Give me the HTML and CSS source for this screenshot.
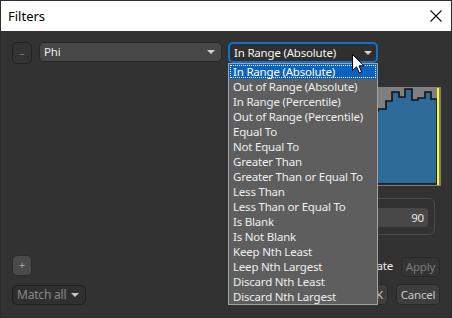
FILE: index.html
```html
<!DOCTYPE html>
<html>
<head>
<meta charset="utf-8">
<link rel="stylesheet" href="styles.css">
</head>
<body>
<div class="window">
  <div class="titlebar">
    <span class="title">Filters</span>
    <svg class="close" width="12" height="12" viewBox="0 0 12 12"><path d="M0.5 0.5 L11.5 11.5 M11.5 0.5 L0.5 11.5" stroke="#111" stroke-width="1.1" fill="none"/></svg>
  </div>
  <div class="content">
    <div class="row1">
      <div class="btn-minus">–</div>
      <div class="select phi"><span>Phi</span><i class="arrow"></i></div>
      <div class="opwrap">
        <div class="select op"><span>In Range (Absolute)</span><i class="arrow"></i></div>
        <ul class="list">
          <li class="sel">In Range (Absolute)</li>
          <li>Out of Range (Absolute)</li>
          <li>In Range (Percentile)</li>
          <li>Out of Range (Percentile)</li>
          <li>Equal To</li>
          <li>Not Equal To</li>
          <li>Greater Than</li>
          <li>Greater Than or Equal To</li>
          <li>Less Than</li>
          <li>Less Than or Equal To</li>
          <li>Is Blank</li>
          <li>Is Not Blank</li>
          <li>Keep Nth Least</li>
          <li>Leep Nth Largest</li>
          <li>Discard Nth Least</li>
          <li>Discard Nth Largest</li>
        </ul>
      </div>
    </div>
    <div class="detail">
      <svg class="hist" width="213" height="99" viewBox="0 0 213 99">
        <rect x="0" y="0" width="213" height="99" fill="#7f7f7f"/>
        <path d="M2 97 L2 80 L20 80 L20 68 L40 68 L40 55 L60 55 L60 48 L80 48 L80 40 L100 40 L100 34 L120 34 L120 28 L140 28 L140 24 L150 24 L150 22 L158 22 L158 14 L164 14 L164 5 L171 5 L171 10 L177 10 L177 2 L184 2 L184 13 L190 13 L190 11 L197 11 L197 5 L203 5 L203 12 L209 12 L209 97 Z" fill="#2e6b98" stroke="#111" stroke-width="1.6" stroke-linejoin="miter"/>
        <rect x="209" y="1" width="2" height="97" fill="#ffff00"/>
      </svg>
      <div class="range">
        <div class="num minv"></div>
        <div class="num maxv">90</div>
      </div>
    </div>
    <div class="spacer"></div>
    <div class="rowa">
      <div class="btn-plus">+</div>
      <div class="right">
        <label class="auto"><span class="cb"></span>Auto Update</label>
        <div class="btn disabled">Apply</div>
      </div>
    </div>
    <div class="rowb">
      <div class="select match"><span>Match all</span><i class="arrow dim"></i></div>
      <div class="right">
        <div class="btn ok">OK</div>
        <div class="btn cancel">Cancel</div>
      </div>
    </div>
  </div>
  <svg class="cursor" width="13" height="20" viewBox="0 0 13 20"><path d="M0.5 0.5 L0.5 16.5 L4.5 12.8 L7.2 18.8 L9.6 17.8 L7 11.8 L12 11.8 Z" fill="#fff" stroke="#000" stroke-width="1" stroke-linejoin="miter"/></svg>
</div>
</body>
</html>
```
FILE: styles.css
```css
* { box-sizing: border-box; }
html, body { margin: 0; padding: 0; background: #323232; }
body { font-family: "Noto Sans", "Open Sans", sans-serif; font-size: 11.5px; letter-spacing: -0.2px; }
.window {
  position: relative;
  width: 452px; height: 318px;
  border: 1px solid #2c2c2c;
  display: flex; flex-direction: column;
  background: #323232;
  overflow: hidden;
}
.titlebar {
  height: 30px; background: #fff;
  display: flex; align-items: center; justify-content: space-between;
  padding: 0 9px 0 7px;
  flex: none;
}
.title { font-size: 13px; color: #000; letter-spacing: 0; }
.close { display: block; margin-top: -1px; }
.content {
  flex: 1;
  display: flex; flex-direction: column;
  padding: 11px 11px 12px 11px;
}
.row1 { display: flex; align-items: flex-start; height: 22px; flex: none; }
.btn-minus {
  width: 20px; height: 22px;
  border: 1px solid #212121; border-radius: 5px;
  background: #333;
  color: #7a7a7a; font-size: 10px; line-height: 20px; text-align: center;
}
.select {
  position: relative;
  display: flex; align-items: center;
  border-radius: 5px;
  color: #ececec;
}
.select span { line-height: 1; }
.arrow {
  position: absolute; right: 6px; top: 50%;
  width: 0; height: 0; margin-top: -2px;
  border-left: 4px solid transparent; border-right: 4px solid transparent;
  border-top: 4px solid #d0d0d0;
}
.arrow.dim { border-top-color: #c8c8c8; }
.phi {
  margin-left: 7px; width: 183px; height: 20px;
  background: #474747; border: 1px solid #262626;
  padding-left: 4px;
}
.opwrap { position: relative; margin-left: 6px; width: 150px; }
.op {
  width: 150px; height: 21px;
  background: #2f2f2f; border: 2px solid #1470c9;
  padding-left: 4px; color: #f4f4f4;
}
.op .arrow { right: 4px; }
.list {
  position: absolute; left: 0; top: 21px; z-index: 5;
  width: 150px; margin: 0; padding: 0; list-style: none;
  background: #5e5e5e; border: 1px solid #a2a2a2;
}
.list li {
  height: 15px; line-height: 15px;
  padding-left: 4px; color: #eeeeee; white-space: nowrap;
}
.list li.sel {
  background: #0c62bf; color: #fff;
  outline: 1px dotted #fff; outline-offset: -2px;
}
.detail { margin-top: 23px; margin-left: 216px; flex: none; }
.hist { display: block; }
.range {
  margin-top: 12px; width: 207px; height: 37px;
  border: 1px solid #4b4b4b; border-radius: 6px;
  display: flex; justify-content: space-between;
  padding: 9px 6px 0 6px;
}
.num {
  width: 88px; height: 19px;
  background: #484848; border-radius: 4px;
  color: #e8e8e8; text-align: right;
  padding-right: 4px; line-height: 19px;
}
.spacer { flex: 1; }
.rowa, .rowb { display: flex; justify-content: space-between; align-items: center; height: 21px; flex: none; }
.rowb { margin-top: 8px; }
.right { display: flex; align-items: center; }
.btn-plus {
  width: 20px; height: 21px;
  background: #4a4a4a; border: 1px solid #2b2b2b; border-radius: 5px;
  color: #a8a8a8; font-size: 10px; line-height: 19px; text-align: center;
}
.auto { display: flex; align-items: center; color: #ececec; margin-right: 8px; }
.cb { width: 13px; height: 13px; border: 1px solid #777; margin-right: 5px; border-radius: 2px; }
.btn {
  height: 20px; border-radius: 5px;
  display: flex; align-items: center; justify-content: center;
}
.disabled { width: 39px; background: #343434; border: 1px solid #282828; color: #7c7c7c; margin-top: 2px; }
.ok { width: 26px; background: #3e3e3e; border: 1px solid #2a2a2a; color: #c8c8c8; height: 21px; margin-right: 8px; }
.cancel { width: 44px; background: #3e3e3e; border: 1px solid #2a2a2a; color: #c8c8c8; height: 21px; }
.match {
  width: 74px; height: 20px;
  background: #2f2f2f; border: 1px solid #1f1f1f;
  padding-left: 4px; color: #888888; font-size: 12px;
}
.match .arrow { right: 6px; }
.cursor { position: absolute; left: 351px; top: 53px; z-index: 10; }
```
